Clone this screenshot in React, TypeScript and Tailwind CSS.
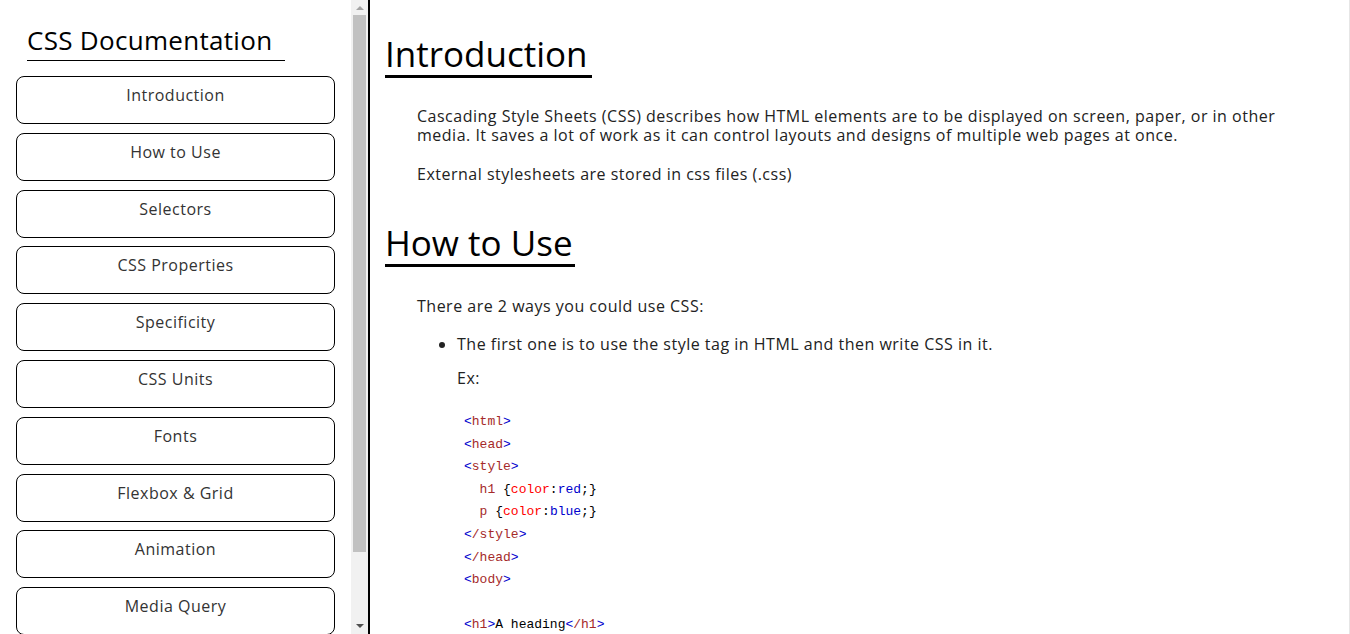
const topics = [
  "Introduction",
  "How to Use",
  "Selectors",
  "CSS Properties",
  "Specificity",
  "CSS Units",
  "Fonts",
  "Flexbox & Grid",
  "Animation",
  "Media Query",
]

const Lt = () => <span className="text-[#0000cd]">&lt;</span>
const Gt = () => <span className="text-[#0000cd]">&gt;</span>

function Tag({ name }: { name: string }) {
  return (
    <span>
      <Lt />
      <span className="text-[#a52a2a]">{name}</span>
      <Gt />
    </span>
  )
}

function Rule({ sel, value }: { sel: string; value: string }) {
  return (
    <span>
      {"  "}
      <span className="text-[#a52a2a]">{sel}</span> {"{"}
      <span className="text-[#ff0000]">color</span>:
      <span className="text-[#0000cd]">{value}</span>;{"}"}
    </span>
  )
}

function ScrollBar() {
  return (
    <div className="flex w-[17px] shrink-0 flex-col items-center bg-[#f1f1f1]">
      <div className="flex h-[15px] w-full items-center justify-center">
        <div className="h-0 w-0 border-x-4 border-b-4 border-x-transparent border-b-[#a3a3a3]" />
      </div>
      <div className="h-[537px] w-[13px] bg-[#c1c1c1]" />
      <div className="flex-1" />
      <div className="flex h-[17px] w-full items-center justify-center">
        <div className="h-0 w-0 border-x-4 border-t-4 border-x-transparent border-t-[#505050]" />
      </div>
    </div>
  )
}

export default function App() {
  return (
    <div className="flex h-[634px] w-full overflow-hidden bg-white font-['Open_Sans',sans-serif] tracking-[0.5px]">
      {/* Sidebar */}
      <nav className="flex w-[370px] shrink-0 border-r-2 border-black">
        <div className="flex-1 overflow-hidden">
          <div className="pl-[27px] pt-[24px]">
            <h1 className="inline-block w-[258px] border-b border-black pb-[3px] text-[26px] leading-[33px] tracking-[0.3px] text-black">
              CSS Documentation
            </h1>
          </div>
          <div className="mt-[15px] flex flex-col gap-[8.8px] px-[16px]">
            {topics.map((t) => (
              <a
                key={t}
                href="#"
                className="block h-[48px] shrink-0 rounded-[8px] border border-black pt-[8px] text-center text-[16px] leading-[20px] text-[#333]"
              >
                {t}
              </a>
            ))}
          </div>
        </div>
        <ScrollBar />
      </nav>

      {/* Main */}
      <main className="flex-1 overflow-hidden border-r border-[#e6e6e6] pl-[15px] pr-[40px] text-[#222]">
        <section className="pt-[33px]">
          <h2 className="inline-block border-b-[3px] border-black pr-[4px] text-[35px] leading-[42px] tracking-normal text-black">
            Introduction
          </h2>
          <div className="mt-[29px] pl-[32px] text-[16px] leading-[19px]">
            <p>
              Cascading Style Sheets (CSS) describes how HTML elements are to be displayed on screen, paper, or in other
              media. It saves a lot of work as it can control layouts and designs of multiple web pages at once.
            </p>
            <p className="mt-[20px]">External stylesheets are stored in css files (.css)</p>
          </div>
        </section>

        <section className="pt-[38px]">
          <h2 className="inline-block border-b-[3px] border-black pr-[2px] text-[35px] leading-[42px] tracking-normal text-black">
            How to Use
          </h2>
          <div className="mt-[30px] pl-[32px] text-[16px] leading-[19px]">
            <p>There are 2 ways you could use CSS:</p>
            <ul className="mt-[19px] list-disc pl-[40px]">
              <li>
                The first one is to use the style tag in HTML and then write CSS in it.
                <p className="mt-[15px]">Ex:</p>
                <pre className="mt-[23px] pl-[7px] font-['Liberation_Mono',monospace] text-[13px] leading-[22.6px] tracking-normal text-black">
                  <Tag name="html" />
                  {"\n"}
                  <Tag name="head" />
                  {"\n"}
                  <Tag name="style" />
                  {"\n"}
                  <Rule sel="h1" value="red" />
                  {"\n"}
                  <Rule sel="p" value="blue" />
                  {"\n"}
                  <Tag name="/style" />
                  {"\n"}
                  <Tag name="/head" />
                  {"\n"}
                  <Tag name="body" />
                  {"\n\n"}
                  <Tag name="h1" />A heading
                  <Tag name="/h1" />
                </pre>
              </li>
            </ul>
          </div>
        </section>
      </main>
    </div>
  )
}
